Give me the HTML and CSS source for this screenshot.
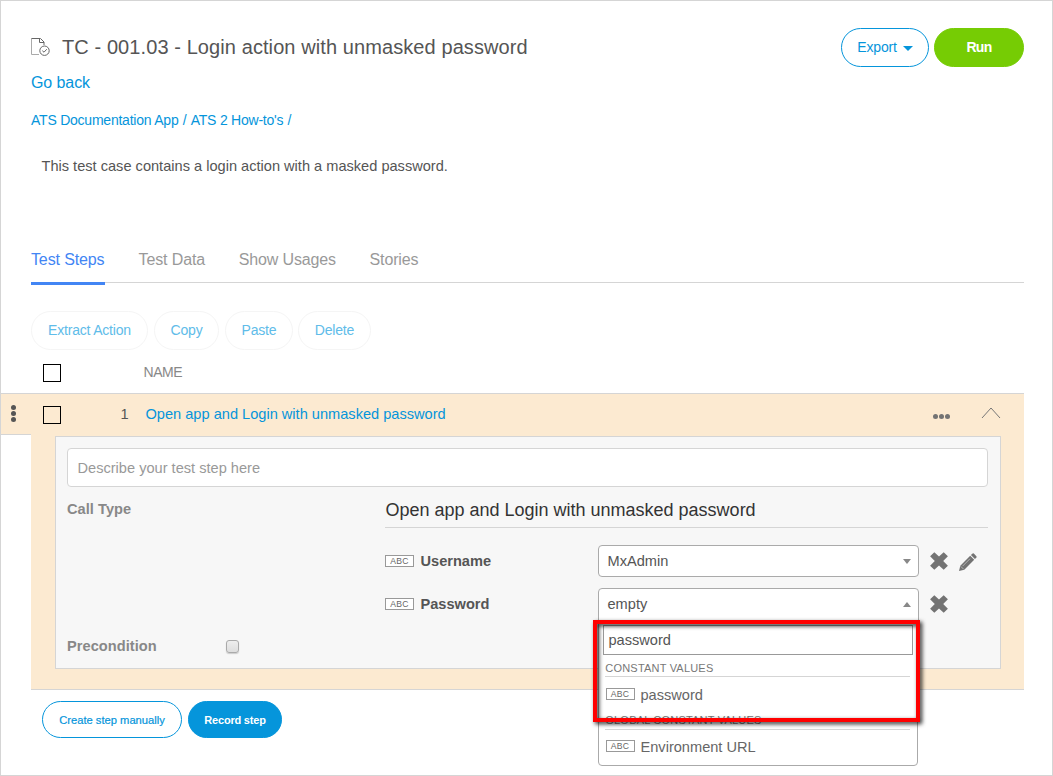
FILE: index.html
```html
<!DOCTYPE html>
<html lang="en">
<head>
<meta charset="utf-8">
<title>Test case</title>
<link rel="stylesheet" href="styles.css">
</head>
<body>
<svg class="defs" aria-hidden="true">
  <symbol id="remove" viewBox="0 0 18 18"><path d="M4.3 0.2 9 4.6 13.7 0.2 17.9 4.2 13.2 9 17.9 13.8 13.7 17.8 9 13.4 4.3 17.8 0.1 13.8 4.8 9 0.1 4.2Z" fill="#737373"/></symbol>
</svg>
<div class="page">
  <header class="header">
    <div class="heading">
      <svg class="doc-icon" viewBox="0 0 20 20" fill="none" stroke="#666"><path d="M8 17.5H.5V1.5" stroke="#aaa"/><path d="M.5 1.5H9.5L13 5V8"/><path d="M8.5 1.5V5.5H13"/><circle cx="13.5" cy="13.7" r="4.7"/><path d="m11.3 13.7 1.7 1.5 2.8-3"/></svg>
      <h1>TC - 001.03 - Login action with unmasked password</h1>
    </div>
    <div class="header-actions">
      <button class="btn export">Export <i class="caret"></i></button>
      <button class="btn run">Run</button>
    </div>
  </header>
  <a class="back">Go back</a>
  <nav class="crumbs"><a>ATS Documentation App</a><span>/</span><a>ATS 2 How-to's</a><span>/</span></nav>
  <p class="description">This test case contains a login action with a masked password.</p>
  <nav class="tabs"><a class="active">Test Steps</a><a>Test Data</a><a>Show Usages</a><a>Stories</a></nav>
  <div class="toolbar">
    <button class="btn">Extract Action</button><button class="btn">Copy</button><button class="btn">Paste</button><button class="btn">Delete</button>
  </div>
  <div class="list-head"><i class="check"></i><span>NAME</span></div>
  <section class="step">
    <div class="handle"><i></i><i></i><i></i></div>
    <div class="step-main">
      <div class="step-row">
        <i class="check"></i><span class="num">1</span><a class="step-name">Open app and Login with unmasked password</a>
        <span class="more"><i></i><i></i><i></i></span>
        <svg class="chevron" viewBox="0 0 20 12" fill="none" stroke="#777"><path d="M1 11 10 1l9 10"/></svg>
      </div>
      <div class="panel">
        <div class="describe">Describe your test step here</div>
        <div class="call">
          <strong class="label">Call Type</strong>
          <div class="call-body">
            <h2>Open app and Login with unmasked password</h2>
            <div class="param">
              <span class="abc">ABC</span><strong>Username</strong>
              <div class="select">MxAdmin<i class="arrow down"></i></div>
              <svg class="remove"><use href="#remove"/></svg>
              <svg class="pencil" viewBox="0 0 18 18"><path d="M0 18 1.3 12.7 11.2 2.8 15.2 6.8 5.3 16.7ZM11.9 2.1 13.3.7Q14 0 14.8.6L17.4 3.2Q18 4 17.3 4.7L15.9 6.1Z" fill="#737373"/><path d="m1.8 13.4 2.8 2.8M3.6 13.1 11 5.7" stroke="#f7f7f7" stroke-width=".5"/></svg>
            </div>
            <div class="param">
              <span class="abc">ABC</span><strong>Password</strong>
              <div class="select open">empty<i class="arrow up"></i>
                <div class="menu">
                  <div class="search">password</div>
                  <div class="group first">CONSTANT VALUES</div>
                  <div class="option"><span class="abc">ABC</span>password</div>
                  <div class="group">GLOBAL CONSTANT VALUES</div>
                  <div class="option last"><span class="abc">ABC</span>Environment URL</div>
                  <div class="highlight"></div>
                </div>
              </div>
              <svg class="remove"><use href="#remove"/></svg>
            </div>
          </div>
        </div>
        <div class="precondition"><strong class="label">Precondition</strong><i class="small-check"></i></div>
      </div>
    </div>
  </section>
  <footer class="footer"><button class="btn create">Create step manually</button><button class="btn record">Record step</button></footer>
</div>
</body>
</html>
```
FILE: styles.css
```css
* { box-sizing: border-box; }
body { margin: 0; background: #fff; font-family: "Liberation Sans", Arial, sans-serif; font-size: 14.6px; color: #555; }
.defs { display: block; width: 0; height: 0; position: absolute; }
.page { width: 1053px; height: 776px; border: 1px solid #d5d5d5; overflow: hidden; }
h1, h2, p { margin: 0; font-weight: 400; }
a { color: #0595db; text-decoration: none; }
.btn { height: 39px; padding: 0 0 2px; border: 1px solid #0595db; border-radius: 20px; background: #fff; color: #0595db; font-family: inherit; font-size: 14px; letter-spacing: -.2px; }

.header { display: flex; justify-content: space-between; padding: 27px 28px 0 30px; height: 66px; }
.heading { display: flex; align-items: center; height: 37px; gap: 11px; }
.doc-icon { width: 20px; height: 20px; }
h1 { font-size: 20px; letter-spacing: .09px; line-height: 24px; }
.header-actions { display: flex; gap: 5px; }
.export { width: 88px; display: flex; align-items: center; justify-content: center; gap: 6px; }
.caret { width: 0; border: 5px solid transparent; border-top-color: #0595db; border-bottom: 0; margin-top: 4px; }
.run { width: 90px; background: #76cc04; border-color: #76cc04; color: #fff; font-weight: 700; font-size: 14px; letter-spacing: -.7px; }

.back { display: block; margin-left: 30px; height: 32px; line-height: 31px; font-size: 16px; letter-spacing: -.08px; }
.crumbs { display: flex; gap: 4.3px; padding-left: 30px; height: 42px; line-height: 43px; font-size: 14px; letter-spacing: -.23px; color: #0595db; }
.description { padding-left: 40.5px; height: 50px; line-height: 50px; }

.tabs { display: flex; gap: 34px; height: 42px; margin: 50px 28px 0 30px; border-bottom: 1px solid #d5d5d5; font-size: 16px; letter-spacing: -.13px; line-height: 34px; }
.tabs a { color: #999; height: 44px; padding-top: 2px; margin-right: -.4px; }
.tabs .active { color: #4285f4; border-bottom: 3px solid #4285f4; width: 74px; white-space: nowrap; }

.toolbar { display: flex; padding: 28px 0 0 30px; height: 68px; }
.toolbar .btn { border-color: #f5f5f5; color: #60bce9; width: 117px; margin-right: 6px; }
.toolbar .btn:nth-child(2) { width: 65px; }
.toolbar .btn:nth-child(3) { width: 68px; margin-right: 5px; }
.toolbar .btn:nth-child(4) { width: 73px; }

.list-head { display: flex; align-items: flex-start; height: 42px; padding: 13px 0 0 42px; }
.list-head span { margin-left: 82.5px; font-size: 14px; letter-spacing: -.45px; line-height: 17px; color: #888; }
.check { width: 18px; height: 18px; border: 1px solid #000; flex: none; }

.step { display: flex; height: 298px; margin-right: 28px; }
.handle { width: 30px; height: 42px; border: solid #d5d5d5; border-width: 1px 0; background: #fcead1; display: flex; flex-direction: column; align-items: center; justify-content: center; gap: 1px; padding: 0 5px 1px 0; }
.handle i, .more i { width: 5px; height: 5px; border-radius: 50%; background: #555; }
.step-main { flex: 1; height: 297px; border: solid #d5d5d5; border-width: 1px 0; background: #fcead1; padding: 0 23px 0 24px; }
.step-row { display: flex; height: 42px; align-items: center; padding: 0; margin-left: -12px; }
.num { width: 67.5px; text-align: right; line-height: 40px; padding-bottom: 2px; }
.step-name { margin-left: 17px; padding-bottom: 2px; flex: 1; }
.more { display: flex; gap: 1px; margin-right: 31px; padding-top: 2px; }
.more i { background: #737373; }
.chevron { width: 20px; height: 12px; margin-bottom: 4px; }

.panel { height: 233px; border: 1px solid #d5d5d5; background: #f7f7f7; padding: 11px 12px 0 11px; }
.describe { height: 39px; border: 1px solid #d5d5d5; border-radius: 4px; background: #fff; padding-left: 9.5px; line-height: 38px; color: #999; }
.call { display: flex; height: 149px; padding-top: 12px; }
.label { color: #888; line-height: 20px; width: 318px; flex: none; letter-spacing: .05px; }
.call-body { flex: 1; }
h2 { font-size: 18px; line-height: 22px; height: 29px; border-bottom: 1px solid #d5d5d5; color: #333; text-indent: .4px; }
.param { display: flex; align-items: center; height: 32px; margin-top: 17px; }
.param + .param { margin-top: 11px; }
.param > strong { width: 177px; margin-left: 6.5px; }
.abc { display: block; width: 29px; height: 12px; border: 1px solid #999; background: #fff; text-align: center; font-size: 8.6px; line-height: 11px; letter-spacing: .2px; color: #666; flex: none; }
.param > .abc { margin-bottom: 1px; }
.select { position: relative; width: 321px; height: 32px; border: 1px solid #aaa; border-radius: 4px; background: #fff; padding-left: 9px; line-height: 30px; flex: none; }
.select.open { border-radius: 4px 4px 0 0; height: 33px; margin-top: 1px; }
.arrow { position: absolute; right: 7px; top: 13px; border: 4.5px solid transparent; }
.down { border-top: 5px solid #888; border-bottom: 0; }
.up { border-bottom: 5px solid #888; border-top: 0; }
.remove { width: 18px; height: 18px; margin-left: 11px; }
.pencil { width: 18px; height: 18px; margin: 2px 0 0 11px; }
.menu { position: absolute; left: -1px; top: 31px; width: 320px; height: 146px; border: 1px solid #aaa; border-radius: 0 0 4px 4px; background: #fff; padding: 4px; z-index: 2; }
.search { width: 310px; height: 30px; border: 1px solid #999; padding-left: 5px; line-height: 29px; }
.group { height: 16px; margin: 0 3px 0 2px; border-bottom: 1px solid #d5d5d5; font-size: 11px; line-height: 12px; color: #777; letter-spacing: .2px; text-indent: .8px; }
.group.first { height: 22px; padding-top: 7px; }
.option { display: flex; align-items: center; height: 37px; gap: 6px; padding: 0 0 2px 3px; color: #666; }
.option.last { height: 35px; }
.option .abc { margin-bottom: 1px; }
.highlight { position: absolute; left: -6px; top: -1px; width: 327px; height: 102px; border: 4px solid #f00; filter: drop-shadow(2px 2px 2px rgba(0,0,0,.85)); }
.precondition { display: flex; height: 20px; }
.precondition .label { width: 159px; }
.small-check { width: 13px; height: 13px; margin-top: 4px; border: 1px solid #aaa; border-radius: 3px; background: linear-gradient(#eee, #ddd); box-shadow: 0 1px 1px #ccc; }

.footer { display: flex; gap: 6px; padding: 10px 0 0 41px; }
.footer .btn { height: 37px; letter-spacing: 0; padding: 0; }
.create { width: 140px; }
.footer .create { font-size: 11.2px; -webkit-text-stroke: .2px #0595db; }
.record { width: 94px; }
.footer .record { background: #0595db; color: #fff; font-weight: 700; font-size: 11px; letter-spacing: -.2px; }
```
